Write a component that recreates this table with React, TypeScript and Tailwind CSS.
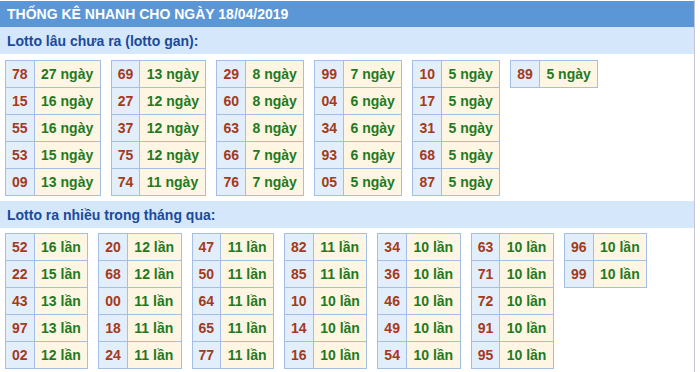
const gan: [string, string][][] = [
  [["78", "27"], ["15", "16"], ["55", "16"], ["53", "15"], ["09", "13"]],
  [["69", "13"], ["27", "12"], ["37", "12"], ["75", "12"], ["74", "11"]],
  [["29", "8"], ["60", "8"], ["63", "8"], ["66", "7"], ["76", "7"]],
  [["99", "7"], ["04", "6"], ["34", "6"], ["93", "6"], ["05", "5"]],
  [["10", "5"], ["17", "5"], ["31", "5"], ["68", "5"], ["87", "5"]],
  [["89", "5"]],
];

const nhieu: [string, string][][] = [
  [["52", "16"], ["22", "15"], ["43", "13"], ["97", "13"], ["02", "12"]],
  [["20", "12"], ["68", "12"], ["00", "11"], ["18", "11"], ["24", "11"]],
  [["47", "11"], ["50", "11"], ["64", "11"], ["65", "11"], ["77", "11"]],
  [["82", "11"], ["85", "11"], ["10", "10"], ["14", "10"], ["16", "10"]],
  [["34", "10"], ["36", "10"], ["46", "10"], ["49", "10"], ["54", "10"]],
  [["63", "10"], ["71", "10"], ["72", "10"], ["91", "10"], ["95", "10"]],
  [["96", "10"], ["99", "10"]],
];

function NumTable({ rows, unit }: { rows: [string, string][]; unit: string }) {
  return (
    <div className="inline-grid grid-cols-[auto_auto] self-start border-t border-l border-[#a3bfe6]">
      {rows.map(([num, count], i) => (
        <div key={i} className="contents">
          <div className="h-[27px] px-[6px] flex items-center justify-center border-r border-b border-[#a3bfe6] bg-[#e3eefb] text-[#a33a1c]">
            {num}
          </div>
          <div className="h-[27px] px-[6.5px] flex items-center border-r border-b border-[#a3bfe6] bg-[#fff5e3] text-[#1f7a1f]">
            {count} {unit}
          </div>
        </div>
      ))}
    </div>
  );
}

function Label({ children }: { children: React.ReactNode }) {
  return (
    <div className="h-[27px] pl-[7px] flex items-center bg-[#d5e8fb] text-[#1b4a9c]">
      {children}
    </div>
  );
}

export default function App() {
  return (
    <div className="w-[700px] h-[372px] bg-white overflow-hidden font-['Liberation_Sans',Arial,sans-serif] font-bold text-[14px] leading-none">
      <div className="w-[695px] h-full pt-px border-r border-[#c4c4d4]">
        <div className="h-[26px] pl-[7px] flex items-center bg-[#5b97d6] text-white">
          THỐNG KÊ NHANH CHO NGÀY 18/04/2019
        </div>
        <Label>Lotto lâu chưa ra (lotto gan):</Label>
        <div className="flex gap-[10px] pl-[5px] mt-[6px]">
          {gan.map((t, i) => (
            <NumTable key={i} rows={t} unit="ngày" />
          ))}
        </div>
        <div className="mt-[5px]">
          <Label>Lotto ra nhiều trong tháng qua:</Label>
        </div>
        <div className="flex gap-[10px] pl-[5px] mt-[5px]">
          {nhieu.map((t, i) => (
            <NumTable key={i} rows={t} unit="lần" />
          ))}
        </div>
      </div>
    </div>
  );
}
